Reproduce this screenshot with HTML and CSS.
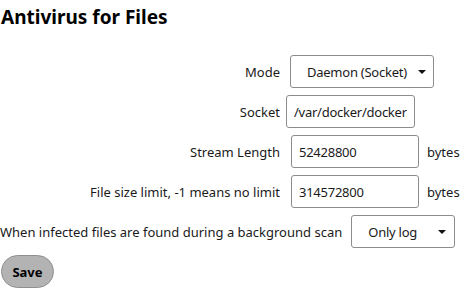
FILE: index.html
```html
<!DOCTYPE html>
<html>
<head>
<meta charset="utf-8">
<link rel="stylesheet" href="styles.css">
</head>
<body>
<div class="section">
  <h2 class="title">Antivirus for Files</h2>
  <form class="form">
    <div class="row">
      <label class="label">Mode</label>
      <div class="select select-mode"><span class="select-text">Daemon (Socket)</span><span class="caret"></span></div>
    </div>
    <div class="row">
      <label class="label">Socket</label>
      <input class="input input-socket" type="text" value="/var/docker/docker/clamav.sock">
    </div>
    <div class="row">
      <label class="label">Stream Length</label>
      <input class="input input-num" type="text" value="52428800">
      <span class="unit">bytes</span>
    </div>
    <div class="row">
      <label class="label">File size limit, -1 means no limit</label>
      <input class="input input-num" type="text" value="314572800">
      <span class="unit">bytes</span>
    </div>
    <div class="row">
      <label class="label label-wide">When infected files are found during a background scan</label>
      <div class="select select-action"><span class="select-text">Only log</span><span class="caret"></span></div>
    </div>
    <div class="row">
      <button class="save" type="button">Save</button>
    </div>
  </form>
</div>
</body>
</html>
```

FILE: styles.css
```css
html, body {
  margin: 0;
  padding: 0;
  background: #ffffff;
}
body {
  font-family: "Noto Sans", "Open Sans", sans-serif;
  font-size: 13px;
  color: #1a1a1a;
}
.title {
  margin: 0;
  padding: 5px 0 0 1px;
  font-size: 19px;
  font-weight: 700;
  line-height: 24px;
  color: #000000;
}
.form {
  margin-top: 26px;
  display: flex;
  flex-direction: column;
  gap: 7px;
}
.row {
  display: flex;
  align-items: center;
  height: 33px;
}
.label {
  width: 280px;
  text-align: right;
  flex: none;
  white-space: nowrap;
}
.label-wide {
  width: auto;
}
.input, .select {
  box-sizing: border-box;
  height: 33px;
  border: 1px solid #8c8c8c;
  border-radius: 3px;
  background: #fff;
  font-family: inherit;
  font-size: 13px;
  letter-spacing: -0.25px;
  color: #1a1a1a;
  padding: 0 7px;
  margin: 0;
  outline: none;
}
.input-socket {
  width: 129px;
  margin-left: 6px;
}
.input-num {
  width: 128px;
  margin-left: 11px;
}
.unit {
  margin-left: 8px;
}
.select {
  display: flex;
  align-items: center;
  justify-content: space-between;
}
.select-mode {
  width: 144px;
  margin-left: 10px;
  padding: 0 7px 0 16px;
}
.select-action {
  width: 104px;
  margin-left: 9px;
  padding: 0 8px 0 16px;
}
.caret {
  width: 0;
  height: 0;
  border-left: 4px solid transparent;
  border-right: 4px solid transparent;
  border-top: 4px solid #111;
}
.save {
  box-sizing: border-box;
  height: 33px;
  width: 53px;
  margin-left: 1px;
  border: 1px solid #8f8f8f;
  border-radius: 17px;
  background: #b3b3b3;
  font-family: inherit;
  font-size: 13px;
  font-weight: 700;
  color: #000;
  padding: 0;
}
```
